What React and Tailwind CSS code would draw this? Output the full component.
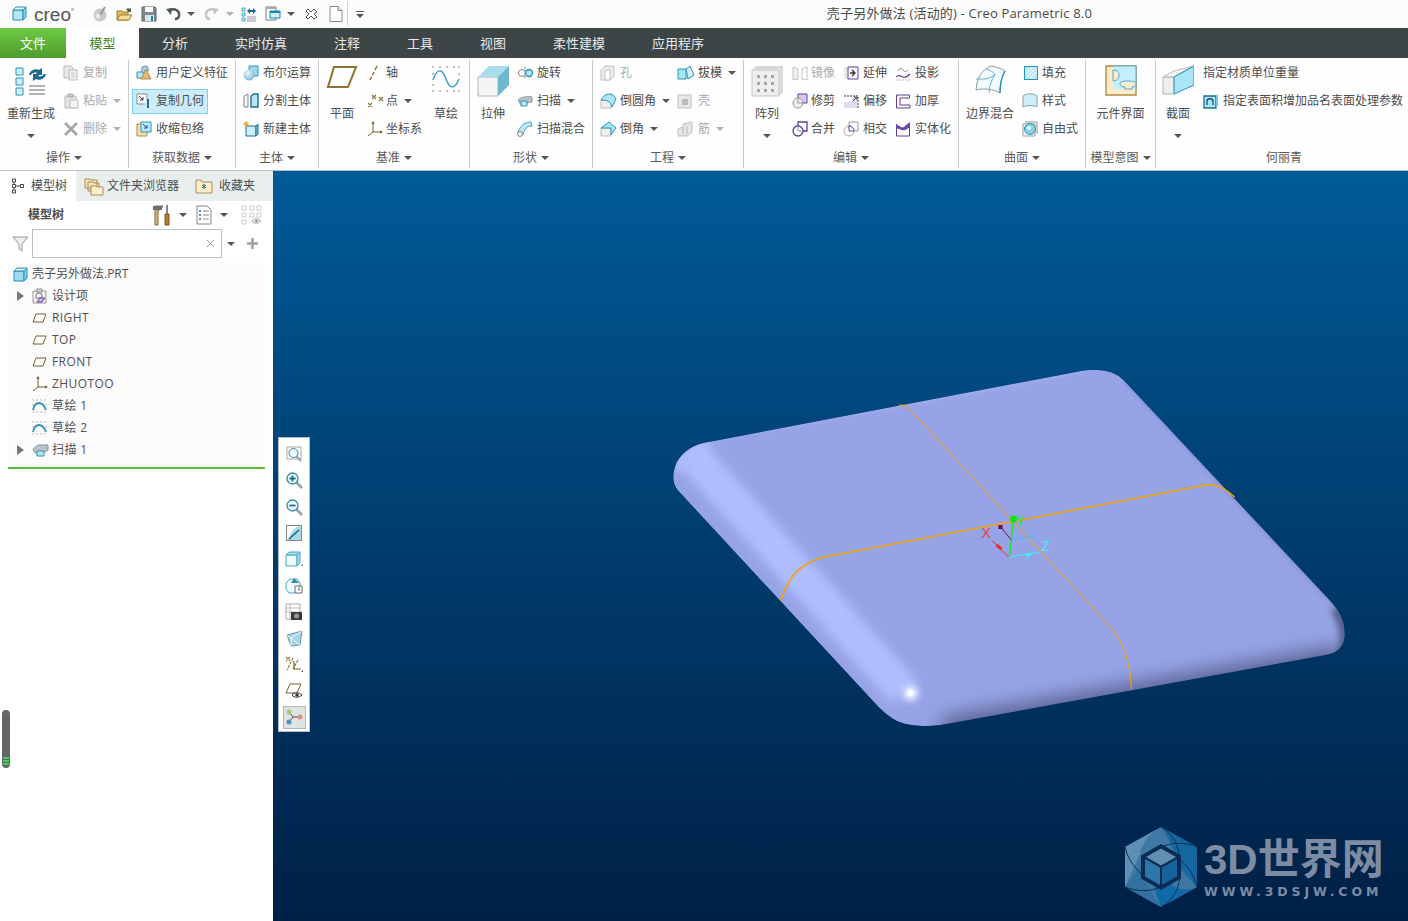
import React from 'react';

const FONT = "font-['Open_Sans','Noto_Sans_CJK_SC',sans-serif]";

// generic pixel-sized svg wrapper
const I = ({ w = 16, h = 16, children, className = '' }) => (
  <svg width={w} height={h} viewBox={`0 0 ${w} ${h}`} fill="none" className={`shrink-0 ${className}`}>
    {children}
  </svg>
);

const Caret = ({ light = false }) => (
  <svg width="8" height="4" viewBox="0 0 8 4" className="shrink-0">
    <path d="M0 0h8L4 4z" fill={light ? '#b0b0b0' : '#555'} />
  </svg>
);

const BoxIcon = ({ x = 1, y = 3, s = 10, d = 3, fill = '#cdeffa', stroke = '#2a93b8' }) => (
  <g stroke={stroke} strokeWidth="1">
    <path d={`M${x} ${y}h${s}v${s}h${-s}z`} fill={fill} />
    <path d={`M${x} ${y}l${d} ${-d}h${s}l${-d} ${d}z`} fill="#eaf9fe" />
    <path d={`M${x + s} ${y}l${d} ${-d}v${s}l${-d} ${d}z`} fill="#8fd0e6" />
  </g>
);

/* quick access icons */
const QDisc = () => (
  <I>
    <circle cx="8" cy="9" r="6.5" fill="#c9c9c9" />
    <path d="M8 9l5-8" stroke="#999" strokeWidth="2" />
    <circle cx="6" cy="10" r="2.5" fill="#e8e8e8" />
  </I>
);
const QFolder = () => (
  <I w={17}>
    <path d="M1 14V5h5l1 1h5v8z" fill="#e0b860" stroke="#a57f2f" />
    <path d="M1 14l3-5h12l-3 5z" fill="#f6dc9a" stroke="#a57f2f" />
    <path d="M10 4c1-2 3-2 4-1l1-1v4h-4l1-1c-1-1-1-1-2-1z" fill="#555" />
  </I>
);
const QSave = () => (
  <I>
    <path d="M1 1h13l1 1v13H1z" fill="#7f8a90" stroke="#5b6468" />
    <path d="M4 1h8v5H4z" fill="#fff" />
    <path d="M4 9h9v6H4z" fill="#d5e8ef" />
    <path d="M10 10h2v5h-2z" fill="#1b8ab5" />
  </I>
);
const QUndo = ({ gray = false }) => (
  <I w={16} h={14}>
    <path d="M5 3C9 1 15 3 14 9c-.4 2-2 3-4 3" stroke={gray ? '#c4c4c4' : '#4b5559'} strokeWidth="2.4" />
    <path d="M1 2l6-1-1 7z" fill={gray ? '#c4c4c4' : '#4b5559'} />
  </I>
);
const QRegen = () => (
  <I>
    <path d="M1 2h3v3H1zM1 7h3v3H1zM1 12h3v3H1z" fill="#cdeffa" stroke="#2a93b8" strokeWidth=".8" />
    <path d="M6 11h9M6 13h9M6 15h9" stroke="#999" />
    <path d="M6 5l3-3v2h2v2H9v2zM15 5l-3-3v2h-1v2h1v2z" fill="#1a6d90" />
  </I>
);
const QWindows = () => (
  <I>
    <path d="M1 1h10v13H1z" fill="#fff" stroke="#777" />
    <path d="M1 1h10v2H1z" fill="#aaa" />
    <path d="M5 5h10v7H5z" fill="#cdeffa" stroke="#1c86ad" />
    <path d="M5 5h10v2H5z" fill="#1c86ad" />
  </I>
);
const QClose = () => (
  <I w={13} h={12}>
    <path d="M3 1l3 3 3-3 3 3-3 2 3 3-3 2-3-3-3 3-2-2 3-3-3-3z" fill="#fff" stroke="#555" />
  </I>
);
const QDoc = () => (
  <I w={14}>
    <path d="M1 .5h8l4 4v11H1z" fill="#fff" stroke="#8a8a8a" />
    <path d="M9 .5v4h4" fill="#e5e5e5" stroke="#8a8a8a" />
  </I>
);

/* ribbon icons, large */
const BigRegen = () => (
  <I w={32} h={32}>
    <path d="M1 3h7v7H1zM1 13h7v7H1zM1 23h7v7H1z" fill="#cdeffa" stroke="#2a93b8" />
    <path d="M14 21h16M14 25h16M14 29h16" stroke="#9a9a9a" strokeWidth="1.6" />
    <path d="M14 10c1-5 7-7 10-5l3-2v7h-7l2-2c-2-1-5 0-6 2zM31 9c-1 5-7 7-10 5l-3 2V9h7l-2 2c2 1 5 0 6-2z" fill="#1a6d90" />
  </I>
);
const BigPlane = () => (
  <I w={32} h={24}>
    <path d="M8 2h22l-8 20H2z" fill="#fff" stroke="#8d7230" strokeWidth="2" />
  </I>
);
const BigSketch = () => (
  <I w={30} h={28}>
    <path d="M2 15C6 3 11 3 15 14c4 11 9 10 13 0" stroke="#3a9fc4" strokeWidth="1.500" />
    <path d="M2 2h.1M9 2h.1M16 2h.1M23 2h.1M28 2h.1M2 9h.1M28 9h.1M2 20h.1M2 26h.1M9 26h.1M16 26h.1M23 26h.1M28 26h.1" stroke="#666" strokeWidth="1.4" strokeLinecap="round" />
  </I>
);
const BigExtrude = () => (
  <I w={32} h={32}>
    <path d="M1 12h20v19H1z" fill="#f5f5f5" stroke="#b5b5b5" />
    <path d="M1 12L12 1h20L21 12z" fill="#a9dcec" />
    <path d="M21 12L32 1v19L21 31z" fill="#6fb6cf" />
    <path d="M21 31l11-11" stroke="#9ad8ec" />
  </I>
);
const BigPattern = () => (
  <I w={32} h={32}>
    <path d="M1 5h27v26H1z" fill="#eee" stroke="#c4c4c4" />
    <path d="M1 5l4-4h27l-4 4zM28 5l4-4v26l-4 4z" fill="#d8d8d8" />
    <path d="M6 10h3v3H6zM13 10h3v3h-3zM20 10h3v3h-3zM6 17h3v3H6zM13 17h3v3h-3zM20 17h3v3h-3zM6 24h3v3H6zM13 24h3v3h-3zM20 24h3v3h-3z" fill="#a5a5a5" />
  </I>
);
const BigBoundary = () => (
  <I w={34} h={32}>
    <path d="M3 25C4 14 8 5 18 1c6 1 11 3 14 5-3 5-5 14-5 22-7-4-16-5-24-3z" fill="#f2fbfe" stroke="#8f9a9e" />
    <path d="M13 4c6 2 8 4 9 5-3 6-6 12-6 19M3 14c6 0 14 1 19-5" stroke="#5db4d0" />
    <path d="M32 6c-3 5-5 14-5 22" stroke="#2a93b8" strokeWidth="1.4" />
  </I>
);
const BigPuzzle = () => (
  <I w={32} h={32}>
    <path d="M1 1h30v29H1z" fill="#fbeccd" stroke="#b58a3f" strokeWidth="1.4" />
    <path d="M8 1h23v23H8z" fill="#c2effb" />
    <path d="M8 1h23v23" stroke="#4fabc9" fill="none" />
    <path d="M8 5c5 0 6 3 6 5s-1 6-6 6z" fill="#fbeccd" stroke="#4fabc9" />
    <path d="M20 24v-2c-3 0-5-1-5-3s3-3 8-3 8 1 8 3c0 2-2 3-4 3v2z" fill="#fbeccd" stroke="#4fabc9" />
  </I>
);
const BigSection = () => (
  <I w={32} h={32}>
    <path d="M1 12h11v17H1z" fill="#eee" stroke="#b5b5b5" />
    <path d="M1 12L12 6l20-5-10 5-10 6z" fill="#f8f8f8" stroke="#b5b5b5" />
    <path d="M12 12L32 1v19L12 29z" fill="#a9e5f7" stroke="#2a93b8" />
  </I>
);

/* ribbon icons, small */
const Copy = () => (
  <I>
    <path d="M1 1h7l2 2v10H1z" fill="#e8e8e8" stroke="#bbb" />
    <path d="M6 5h8v10H6z" fill="#f2f2f2" stroke="#bbb" />
    <path d="M8 8h4M8 10h4M8 12h4" stroke="#c8c8c8" />
  </I>
);
const Paste = () => (
  <I>
    <path d="M2 3h11v12H2z" fill="#e4e4e4" stroke="#bbb" />
    <path d="M5 1h5v3H5z" fill="#ccc" stroke="#aaa" />
    <path d="M7 7h8v8H7z" fill="#f4f4f4" stroke="#bbb" />
  </I>
);
const Del = () => (
  <I>
    <path d="M2 2l12 12M14 2L2 14" stroke="#a5a5a5" strokeWidth="2.6" />
  </I>
);
const Udf = () => (
  <I>
    <path d="M1 7h7v6H1z" fill="#b7e5f5" stroke="#2a93b8" />
    <circle cx="9" cy="4.5" r="3.5" fill="#a7cfe6" stroke="#6a8fb0" />
    <path d="M10 4l5 10H5z" fill="#e0b97a" stroke="#b58a3f" />
  </I>
);
const CopyGeom = () => (
  <I>
    <path d="M1 1h10v10H1z" fill="#fff" stroke="#888" />
    <path d="M3 3l4 4M7 4v3H4" stroke="#333" />
    <path d="M9 6h6v9H9z" fill="#cdeffa" />
    <path d="M11 6h2v9h-2z" fill="#1a6d90" />
  </I>
);
const Shrink = () => (
  <I>
    <path d="M1 3h10v12H1z" fill="#f6dfae" stroke="#b58a3f" />
    <path d="M5 1h10v10H5z" fill="#bdeafa" stroke="#2a93b8" />
    <path d="M7 3l4 4M11 4v3H8" stroke="#1a4d70" />
  </I>
);
const Bool = () => (
  <I>
    <path d="M6 1h9v10H6z" fill="#9fd6ea" stroke="#2a93b8" />
    <circle cx="6" cy="10" r="5.5" fill="url(#sph)" />
    <defs>
      <radialGradient id="sph" cx=".4" cy=".35" r=".7">
        <stop offset="0" stopColor="#eef9fd" />
        <stop offset="1" stopColor="#7ab9cf" />
      </radialGradient>
    </defs>
  </I>
);
const Split = () => (
  <I>
    <path d="M1 3l4-2v13H1z" fill="#eaf8fc" stroke="#888" />
    <path d="M8 3l3-2h4v13H8z" fill="#b7e5f5" stroke="#1a6d90" strokeWidth="1.4" />
  </I>
);
const NewBody = () => (
  <I>
    <path d="M3 5h10v10H3z" fill="#c9f0fb" stroke="#1a6d90" />
    <path d="M13 5l2-2v10l-2 2z" fill="#8fd0e6" stroke="#1a6d90" />
    <circle cx="3" cy="3" r="2" fill="#f3a72a" />
    <path d="M3 0v6M0 3h6" stroke="#f3a72a" />
  </I>
);
const Axis = () => (
  <I w={14}>
    <path d="M10 1L8 5M7 7L5.5 10M4.5 12L3 15" stroke="#8d7230" strokeWidth="1.5" />
  </I>
);
const Point = () => (
  <I w={18} h={14}>
    <path d="M5 1l4 4M9 1L5 5M12 3l4 4M16 3l-4 4M1 9l4 4M5 9l-4 4" stroke="#8d7230" strokeWidth="1.2" />
  </I>
);
const Csys = ({ s = 16 }) => (
  <svg width={s} height={s} viewBox="0 0 16 16" fill="none" className="shrink-0">
    <path d="M6 1v10l-5 4M6 11h9" stroke="#7a5f28" />
    <path d="M4.500 3L6 0l1.500 3zM13 9.500l3 1.500-3 1.500z" fill="#7a5f28" />
  </svg>
);
const Revolve = () => (
  <I w={17} h={14}>
    <path d="M8 1v12" stroke="#777" strokeDasharray="2 1" />
    <circle cx="5" cy="7" r="3.500" stroke="#888" fill="#fff" />
    <circle cx="12" cy="7" r="3.500" stroke="#2a93b8" fill="#b7e5f5" strokeWidth="1.4" />
  </I>
);
const Sweep = () => (
  <I w={16} h={14}>
    <path d="M1 6c3-3 8-4 14-3v5c-3 0-5 1-6 3H4z" fill="#b9c3c8" stroke="#8c979b" />
    <path d="M4 7h6v5H4z" fill="#b7e5f5" stroke="#2a93b8" />
  </I>
);
const Blend = () => (
  <I>
    <path d="M1 12C2 6 7 1 14 1l1 4c-5 0-8 3-9 9z" fill="#bfe7f4" stroke="#4ea5c4" />
    <circle cx="3" cy="13" r="2.500" fill="#eee" stroke="#888" />
  </I>
);
const Hole = () => (
  <I>
    <path d="M1 5l4-4h9v10l-4 4H1z" fill="#eee" stroke="#c0c0c0" />
    <path d="M5 5h5v10H5z" fill="#fff" stroke="#c0c0c0" />
  </I>
);
const Draft = () => (
  <I w={18}>
    <path d="M1 4h8v10H1z" fill="#a9e5f7" stroke="#2a93b8" />
    <path d="M9 4l4-3 4 9-6 4z" fill="#d6f3fb" stroke="#2a93b8" />
  </I>
);
const Round = () => (
  <I w={17}>
    <path d="M1 7h10v8H1z" fill="#eee" stroke="#bbb" />
    <path d="M1 7c2-4 5-6 9-6 3 0 5 3 6 5l-4 8c-1-3-2-7-11-7z" fill="#a9e5f7" stroke="#2a93b8" />
  </I>
);
const Shell = () => (
  <I>
    <path d="M1 2h13v13H1z" fill="#e8e8e8" stroke="#c0c0c0" />
    <path d="M5 6h6v6H5z" fill="#bbb" />
  </I>
);
const Chamfer = () => (
  <I w={17}>
    <path d="M1 7h10v8H1z" fill="#eee" stroke="#bbb" />
    <path d="M1 7l8-6 7 6-5 7V7z" fill="#a9e5f7" stroke="#2a93b8" />
  </I>
);
const Rib = () => (
  <I>
    <path d="M1 8l5-2v-3l9-2v10l-5 4H1z" fill="#e6e6e6" stroke="#c0c0c0" />
    <path d="M6 6v7M10 5v8" stroke="#bbb" />
  </I>
);
const Mirror = () => (
  <I>
    <path d="M1 2l5 2v10l-5 1z" fill="#f0f0f0" stroke="#c0c0c0" />
    <path d="M15 2l-5 2v10l5 1z" fill="#fff" stroke="#c0c0c0" />
  </I>
);
const Extend = () => (
  <I>
    <path d="M1 2h4v12H1z" fill="#e8e8e8" />
    <path d="M5 2h10v12H5z" fill="#fff" stroke="#5c3d99" />
    <path d="M7 8h4M9 5l3 3-3 3" stroke="#333" strokeWidth="1.400" />
  </I>
);
const Project = () => (
  <I>
    <path d="M3 6c2-4 4-3 5-1s3 2 5 0" stroke="#8a8a8a" />
    <path d="M1 12c3-3 5-1 7 0s4 0 7-3" stroke="#6a3fa0" strokeWidth="1.300" />
    <path d="M1 15h14" stroke="#bbb" strokeDasharray="2 1" />
  </I>
);
const Trim = () => (
  <I>
    <path d="M6 1h9v9H6z" fill="#d8cdf0" stroke="#5c3d99" />
    <circle cx="6" cy="10" r="5" fill="#eee" stroke="#999" />
    <path d="M6 10V5M6 10h5" stroke="#999" />
  </I>
);
const Offset = () => (
  <I>
    <path d="M1 3h14v12" stroke="#333" strokeDasharray="2 1" />
    <path d="M1 15V9h8V5l5-2v12z" fill="#e4dbf3" />
    <path d="M10 8l4-4M11 4h3v3" stroke="#444" />
  </I>
);
const Thicken = () => (
  <I>
    <path d="M1.500 2h13v3H5v7h10v3H1.500z" fill="#fff" stroke="#5c3d99" />
  </I>
);
const Merge = () => (
  <I>
    <path d="M6 1h9v9H6z" fill="#fff" stroke="#5c3d99" strokeWidth="1.300" />
    <circle cx="6" cy="10" r="5" fill="#fff" stroke="#5c3d99" strokeWidth="1.300" />
    <path d="M6 10V5M6 10h5" stroke="#999" />
  </I>
);
const Intersect = () => (
  <I>
    <path d="M6 1h9v9H6z" fill="#fff" stroke="#999" />
    <circle cx="6" cy="10" r="5" fill="#fff" stroke="#aaa" />
    <path d="M6 5a5 5 0 015 5H6z" fill="#fff" stroke="#5c3d99" />
  </I>
);
const Solidify = () => (
  <I>
    <path d="M1.500 3v12h13V2" fill="#fff" stroke="#5c3d99" />
    <path d="M1 3l5 3c2 1 3 0 5-2l4-3v5c-3 2-5 4-8 3L1 7z" fill="#6a4aa6" />
  </I>
);
const Fill = () => (
  <I w={14} h={14}>
    <rect x=".5" y=".5" width="13" height="13" fill="#bfe9f6" stroke="#2a93b8" />
    <path d="M2 8l6-6M4 10l6-6M6 12l6-6" stroke="#fff" />
  </I>
);
const Style = () => (
  <I>
    <path d="M1 3c4-3 10-3 14 0v11c-4-2-10-2-14 0z" fill="#cdeffa" stroke="#8a9ea6" />
  </I>
);
const Freeform = () => (
  <I>
    <path d="M1 3h12v12H1zM3 1h12v12" stroke="#999" />
    <circle cx="8" cy="8" r="5.500" fill="#8fd0e6" stroke="#2a93b8" />
    <circle cx="7" cy="7" r="2" fill="#e9f8fd" />
  </I>
);
const FaceParam = () => (
  <I>
    <path d="M1 3h12v12H1z" fill="#a9e5f7" stroke="#1a6d90" strokeWidth="1.300" />
    <path d="M13 3l2-2v12l-2 2z" fill="#7fc4dc" />
    <path d="M4 12V8c0-3 6-3 6 0v4" stroke="#134f6e" strokeWidth="1.300" />
  </I>
);

/* model tree icons */
const TreeTabIcon = () => (
  <I w={14} h={16}>
    <path d="M1.500 1h3v3h-3zM1.500 6.500h3v3h-3zM1.500 12h3v3h-3zM9.500 6.500h3v3h-3zM3 4v2.500M3 9.500V12M4.500 8h5" stroke="#444" />
  </I>
);
const FoldersIcon = () => (
  <I w={20} h={20}>
    <path d="M1 3h5l1 1h6v8H1zM4 6h5l1 1h5v8H4z" fill="#f6e3b6" stroke="#a88d55" />
    <path d="M7 10h5l1 1h6v8H7z" fill="#fbeecb" stroke="#a88d55" />
  </I>
);
const FavIcon = () => (
  <I w={18} h={16}>
    <path d="M1 4V2h5l1 2h10v11H1z" fill="#fbeecb" stroke="#a88d55" />
    <path d="M9 6v5M7 7l4 3M11 7l-4 3" stroke="#1a6d90" />
  </I>
);
const Hammer = () => (
  <I w={20} h={22}>
    <path d="M3 2h8l-3 4H6v15H3z" fill="#d6b378" stroke="#8a6a30" />
    <path d="M1 2h9v4H1z" fill="#66707a" />
    <path d="M14 1h2v9h-2z" fill="#7d868c" />
    <path d="M13 10h4v11h-4z" fill="#b57b2e" stroke="#80551b" />
  </I>
);
const ListIcon = () => (
  <I w={16} h={20}>
    <path d="M1 1h10l4 4v14H1z" fill="#fff" stroke="#888" />
    <path d="M3 6h2M3 10h2M3 14h2" stroke="#1a6d90" strokeWidth="1.400" />
    <path d="M7 6h6M7 10h6M7 14h6" stroke="#888" />
  </I>
);
const TreeHidden = () => (
  <I w={21} h={20}>
    <path d="M1 1h4v4H1zM1 8h4v4H1zM1 15h4v4H1zM9 1h4v4H9zM16 1h4v4h-4zM9 8h4v4H9zM16 8h4v4h-4z" stroke="#ccc" />
    <path d="M11 16c2-3 6-3 9 0-3 3-7 3-9 0z" stroke="#aaa" fill="#eee" />
    <circle cx="15.500" cy="16" r="1.500" fill="#999" />
  </I>
);
const Funnel = () => (
  <I w={17} h={16}>
    <path d="M1 1h15l-6 7v7l-3-2V8z" fill="#eee" stroke="#8e9899" />
  </I>
);
const TreeCube = () => (
  <I w={15} h={15}>
    <BoxIcon x={1} y={4} s={10} d={3} fill="#9fdcf3" stroke="#1f8eb8" />
  </I>
);
const DesignItems = () => (
  <I w={15} h={16}>
    <path d="M1 3h13v12H1z" fill="#f2f2f2" stroke="#999" />
    <path d="M5 1h5v3H5z" fill="#ddd" stroke="#888" />
    <path d="M4 8a3 3 0 016 0v2H4z" stroke="#6a7e88" />
    <path d="M5 14l3-4h5l-3 4z" fill="#cdb5ea" stroke="#6a3fa0" />
  </I>
);
const TreePlane = () => (
  <I w={15} h={10}>
    <path d="M4 1h10l-3 8H1z" fill="#fff" stroke="#7a5f28" />
  </I>
);
const TreeSketch = () => (
  <I w={15} h={14}>
    <path d="M1 11c1-5 3-7 6-7s5 2 7 7" stroke="#2a93b8" strokeWidth="1.800" />
    <path d="M1 1h.1M5 1h.1M9 1h.1M13 1h.1M1 6h.1M14 6h.1M1 13h.1M5 13h.1M9 13h.1M13 13h.1" stroke="#666" strokeLinecap="round" />
  </I>
);
const TreeSweep = () => (
  <I w={17} h={13}>
    <path d="M1 5l5-4h10v5l-5 3H3z" fill="#b9c3c8" stroke="#8c979b" />
    <path d="M5 7h7v5H5z" fill="#b7e5f5" stroke="#2a93b8" />
  </I>
);

/* floating view toolbar icons */
const Zoom = ({ sign }) => (
  <I w={18} h={18}>
    <path d="M11 11l6 6" stroke="#9ba4a8" strokeWidth="2.600" />
    <circle cx="7.500" cy="7.500" r="5.500" fill="#eef9fd" stroke="#2a8aa8" strokeWidth="1.300" />
    {sign === '+' && <path d="M7.500 4.500v6M4.500 7.500h6" stroke="#1a6d90" strokeWidth="1.800" />}
    {sign === '-' && <path d="M4.500 7.500h6" stroke="#1a6d90" strokeWidth="1.800" />}
  </I>
);
const ZoomBox = () => (
  <I w={17} h={17}>
    <path d="M1 1h14v12H1z" fill="#fff" stroke="#aaa" />
    <path d="M10 10l5 5" stroke="#9ba4a8" strokeWidth="2.400" />
    <circle cx="7.500" cy="7" r="4.500" fill="#eef9fd" stroke="#2a8aa8" />
  </I>
);
const Refit = () => (
  <I w={16} h={16}>
    <rect x=".5" y=".5" width="15" height="15" fill="#a9d8e8" stroke="#888" />
    <path d="M1 1h14C9 2 5 6 3 13l-2 2z" fill="#fff" />
    <path d="M3 14L13 5" stroke="#1a6d90" strokeWidth="1.600" />
  </I>
);
const ViewCube = () => (
  <I w={19} h={18}>
    <path d="M1 5h11v11H1z" fill="#eefafe" stroke="#4ba7c6" />
    <path d="M1 5l3-3h11l-3 3zM12 5l3-3v11l-3 3z" fill="#a9dcec" stroke="#4ba7c6" />
    <path d="M16 16h2v-2z" fill="#555" />
  </I>
);
const ViewCube2 = () => (
  <I w={19} h={18}>
    <path d="M1 6l4-4h7l3 4v6l-5 4H4l-3-4z" fill="#eefafe" stroke="#4ba7c6" />
    <path d="M6 6l3-5 5 5z" fill="#3f87aa" />
    <path d="M10 9h7v7h-7z" fill="#fff" stroke="#666" />
    <path d="M13 11h2M13 13h2" stroke="#666" />
  </I>
);
const Camera = () => (
  <I w={18} h={18}>
    <path d="M1 1h14v15H1z" fill="#fff" stroke="#aaa" />
    <path d="M1 5h14M1 9h14M5 1v15" stroke="#bbb" />
    <path d="M6 9h11v8H6z" fill="#3b3b3b" />
    <circle cx="11.500" cy="13" r="2.500" fill="#999" />
  </I>
);
const Perspective = () => (
  <I w={17} h={17}>
    <path d="M1 5l15-4-2 14-9 1z" fill="#a9d4e4" stroke="#5c9bb5" />
    <path d="M5 8l11-7M5 16V8M1 5l4 3M5 8l9 7" stroke="#e4f5fb" />
  </I>
);
const Datums = () => (
  <I w={18} h={18}>
    <path d="M1 1l4 4M5 1L1 5M8 2L2 14M13 4l-5 9" stroke="#8d7230" strokeWidth="1.100" strokeDasharray="3 1" />
    <path d="M9 5v8h7" stroke="#7a5f28" strokeWidth="1.200" />
    <path d="M16 16h2v-2z" fill="#555" />
  </I>
);
const PlaneEye = () => (
  <I w={18} h={16}>
    <path d="M5 1h11l-4 9H1z" fill="#fff" stroke="#7a5f28" />
    <path d="M7 12c2-3 7-3 10 0-3 3-8 3-10 0z" fill="#fff" stroke="#333" />
    <circle cx="12" cy="12" r="1.800" fill="#333" />
  </I>
);
const Nodes = () => (
  <I w={18} h={16}>
    <path d="M4 3l4 5-4 5M8 8h7" stroke="#555" />
    <circle cx="4" cy="3" r="2.500" fill="#9ec97b" />
    <circle cx="4" cy="13" r="2.500" fill="#4f93b8" />
    <circle cx="15" cy="8" r="2.500" fill="#e58a8a" />
  </I>
);

/* ribbon layout helpers */
const Row = ({ icon, text, arrow, gray, iw = 20, selected }) => (
  <div className="h-7 flex items-center whitespace-nowrap">
    <div className={selected ? 'h-[25px] w-[76px] pl-1 flex items-center bg-[#ccecfb] ring-1 ring-inset ring-[#7fd3f2]' : 'flex items-center'}>
      {icon !== undefined && <span className="flex items-center" style={{ width: iw }}>{icon}</span>}
      <span className={gray ? 'text-[#a9a9a9]' : 'text-[#4d4d4d]'}>{text}</span>
      {arrow && <span className="ml-1.5 flex"><Caret light={gray} /></span>}
    </div>
  </div>
);

const Big = ({ icon, label, arrow, w }) => (
  <div className="flex flex-col items-center shrink-0" style={{ width: w }}>
    <div className="h-[38px] pt-1.5 flex justify-center">{icon}</div>
    <div className="mt-2 h-[18px] leading-[18px] text-[#4d4d4d] whitespace-nowrap">{label}</div>
    {arrow && <div className="mt-[11px] flex"><Caret /></div>}
  </div>
);

const Group = ({ w, label, arrow = true, children }) => (
  <div className="flex flex-col shrink-0" style={{ width: w }}>
    <div className="h-[85px] pt-px flex">{children}</div>
    <div className={`h-[27px] flex items-center justify-center gap-1 text-[#5a5a5a] pt-0.5 ${arrow ? '' : 'pl-1'}`}>
      <span>{label}</span>
      {arrow && <Caret />}
    </div>
  </div>
);

const Sep = () => <div className="w-px my-[2px] bg-[#c6cccc] shrink-0" />;

const Tab = ({ children }) => (
  <div className="text-[13px] text-[#e8eaea] whitespace-nowrap mr-[47px] leading-[30px]">{children}</div>
);

const TreeRow = ({ icon, text, expand, root, wide }) => (
  <div className={`h-[22px] flex items-center whitespace-nowrap text-[#505050] ${wide ? 'tracking-[0.4px]' : ''}`}>
    {root ? (
      <>
        <span className="ml-1 w-[19px] flex">{icon}</span>
        <span>{text}</span>
      </>
    ) : (
      <>
        <span className="w-[24px] pl-[9px] flex">
          {expand && (
            <svg width="7" height="10" viewBox="0 0 7 10"><path d="M0 0l7 5-7 5z" fill="#777" /></svg>
          )}
        </span>
        <span className="w-[20px] flex">{icon}</span>
        <span>{text}</span>
      </>
    )}
  </div>
);

// the part in the graphics area, coordinates are page pixels
const OUTLINE =
  'M709 442 L1082 371 Q1110 366 1124 380 L1330 600 Q1346 617 1345 636 Q1344 652 1326 655 L941 725 Q908 729 892 718 Q885 713 879 707 L678 490 Q670 480 677 463 Q686 446 709 442 Z';

const FILTER_BOX = { filterUnits: 'userSpaceOnUse', x: 274, y: 171, width: 1134, height: 750 };

const Model = () => (
  <svg viewBox="274 171 1134 750" className="absolute inset-0 w-full h-full">
    <defs>
      <clipPath id="part"><path d={OUTLINE} /></clipPath>
      <filter id="b10" {...FILTER_BOX}><feGaussianBlur stdDeviation="10" /></filter>
      <filter id="b5" {...FILTER_BOX}><feGaussianBlur stdDeviation="5" /></filter>
      <filter id="b3" {...FILTER_BOX}><feGaussianBlur stdDeviation="3" /></filter>
      <filter id="b2" {...FILTER_BOX}><feGaussianBlur stdDeviation="2" /></filter>
    </defs>
    <g clipPath="url(#part)" fill="none">
      <path d={OUTLINE} fill="#96a3e6" />
      {/* lighter rounded left side */}
      <path d="M690 452 L905 692" stroke="#afbdff" strokeWidth="34" filter="url(#b5)" />
      <path d="M680 470 Q676 450 710 444" stroke="#afbdff" strokeWidth="12" filter="url(#b5)" />
      {/* dark bottom and right edges */}
      <path d="M945 740 L1345 668" stroke="#565f8c" strokeWidth="44" filter="url(#b10)" />
      <path d="M1128 378 L1346 612" stroke="#6e79b4" strokeWidth="6" filter="url(#b3)" />
      <path d="M1336 608 Q1352 630 1342 658" stroke="#565f8c" strokeWidth="12" filter="url(#b3)" />
      <path d="M715 438 L1090 368" stroke="#b4c0f6" strokeWidth="3" filter="url(#b2)" />
      <circle cx="911" cy="693" r="9" fill="#d0daff" filter="url(#b3)" />
      <circle cx="911" cy="693" r="4" fill="#fff" filter="url(#b2)" />
      <circle cx="911" cy="693" r="2.500" fill="#fff" />
    </g>
    {/* section curves */}
    <path d="M899 405 Q905 404 909 408 L1111 627 Q1131 650 1132 690" stroke="#f5a300" strokeWidth="1" fill="none" />
    <path d="M781 601 Q790 575 803 567 Q812 560 825 557 L1207 485 Q1220 483 1235 497" stroke="#f5a300" strokeWidth="1.500" fill="none" />
    {/* triad */}
    <path d="M1014 518 L1010 557" stroke="#22e422" strokeWidth="1.500" />
    <circle cx="1014" cy="519" r="3.500" fill="#14e014" />
    <path d="M1001 527 L1012 540" stroke="#7a0a4a" />
    <rect x="999" y="525" width="4" height="4" fill="#7a0a4a" />
    <path d="M993 541 L1009 557" stroke="#ee2a2a" />
    <path d="M997 545 L1002 549" stroke="#ee2a2a" strokeWidth="3" />
    <path d="M1012 540 L1033 536" stroke="#4fb8f0" />
    <circle cx="1033" cy="536" r="2" fill="#4fb8f0" />
    <path d="M1010 557 L1040 552" stroke="#3ff0f0" />
    <path d="M1026 553 L1033 554 L1027 558z" fill="#3ff0f0" />
    <g className="font-['Liberation_Sans',sans-serif]" fontSize="14">
      <text x="982" y="538" fill="#ee3a3a">X</text>
      <text x="1016" y="526" fill="#22e422">Y</text>
      <text x="1042" y="551" fill="#3ff0f0">Z</text>
    </g>
  </svg>
);

const Watermark = () => (
  <div className="absolute left-[851px] top-[655px] flex items-start gap-[6px]">
    <svg width="74" height="82" viewBox="0 0 74 82" className="shrink-0">
      <path d="M37 1L73 21V61L37 81L1 61V21z" fill="#3f78a5" />
      <path d="M37 1L73 21V61L52 38C50 22 44 10 37 1z" fill="#14689f" />
      <path d="M1 21L37 1C30 5 18 14 16 28L1 61z" fill="#5f8fb3" />
      <path d="M1 61L18 38C18 52 26 66 37 81z" fill="#31709f" />
      <path d="M37 81L73 61C62 66 52 64 46 56L30 62z" fill="#116aa8" />
      <path d="M37 1C50 8 56 22 56 38M73 21C62 16 46 16 36 22M73 61C70 48 62 38 52 30M37 81C50 74 56 62 56 46M1 61C12 66 28 66 38 60M1 21C4 34 12 44 22 52"
        stroke="#0e2f57" strokeWidth="1" fill="none" />
      <path d="M37 18L57 29.500V52.500L37 64L17 52.500V29.500z" fill="#0c2b54" />
      <path d="M37 22.500L52 31L37 39.500L22 31z" fill="#5f8fb3" />
      <path d="M21 33L36 41.500V59L21 50.500z" fill="#2d76a9" />
      <path d="M53 33L38 41.500V59L53 50.500z" fill="#15639a" />
    </svg>
    <div className="flex flex-col pt-[10px]">
      <div className="text-[42px] leading-[48px] font-bold text-[#7d8ca3] whitespace-nowrap font-['Liberation_Sans','Noto_Sans_CJK_SC',sans-serif]">3D世界网</div>
      <div className="-mt-px text-[12.500px] leading-[18px] font-bold tracking-[3.900px] text-[#7d8ca3] whitespace-nowrap font-['DejaVu_Sans',sans-serif]">WWW.3DSJW.COM</div>
    </div>
  </div>
);

const ToolSlot = ({ children }) => <div className="h-[26.300px] flex items-center">{children}</div>;

export default function App() {
  return (
    <div className={`w-[1408px] h-[921px] overflow-hidden flex flex-col bg-white text-xs ${FONT}`}>
      {/* title bar */}
      <div className="h-7 flex items-center bg-[#fcfcfc] shrink-0">
        <div className="ml-3 flex"><I w={16} h={16}><BoxIcon x={1} y={4} s={10} d={3} fill="#b7e5f5" stroke="#1f8eb8" /></I></div>
        <span className="ml-[6px] text-[19px] leading-none text-[#555] font-['Liberation_Sans',sans-serif]">creo</span>
        <span className="text-[7px] text-[#555] -mt-1">°</span>
        <div className="ml-[18px] flex items-center">
          <QDisc />
          <span className="ml-[8px] flex"><QFolder /></span>
          <span className="ml-[8px] flex"><QSave /></span>
          <span className="ml-[8px] flex"><QUndo /></span>
          <span className="ml-[6px] flex"><Caret /></span>
          <span className="ml-[9px] flex [transform:scaleX(-1)]"><QUndo gray /></span>
          <span className="ml-[6px] flex"><Caret light /></span>
          <span className="ml-[7px] flex"><QRegen /></span>
          <span className="ml-[8px] flex"><QWindows /></span>
          <span className="ml-[6px] flex"><Caret /></span>
          <span className="ml-[10px] flex"><QClose /></span>
          <span className="ml-[11px] flex"><QDoc /></span>
          <span className="ml-[4px] w-px h-[24px] bg-[#cfcfcf]" />
          <span className="ml-[8px] flex flex-col gap-[2px]">
            <span className="w-2 h-px bg-[#555]" />
            <Caret />
          </span>
        </div>
        <span className="ml-auto mr-[316px] text-[13px] tracking-[0.18px] text-[#4a4a4a] whitespace-nowrap">壳子另外做法 (活动的) - Creo Parametric 8.0</span>
      </div>

      {/* tabs */}
      <div className="h-[30px] flex bg-[#3d4547] shrink-0">
        <div className="w-[66px] text-center text-[13px] leading-[30px] text-white bg-gradient-to-b from-[#6ccb41] to-[#4f9c2f]">文件</div>
        <div className="w-[73px] text-center text-[13px] leading-[30px] text-[#3f8526] bg-white mr-[23px]">模型</div>
        <Tab>分析</Tab>
        <Tab>实时仿真</Tab>
        <Tab>注释</Tab>
        <Tab>工具</Tab>
        <Tab>视图</Tab>
        <Tab>柔性建模</Tab>
        <Tab>应用程序</Tab>
      </div>

      {/* ribbon */}
      <div className="h-[113px] flex border-b border-[#b9c0c0] bg-[#fefefe] shrink-0">
        <Group w={128} label="操作">
          <Big w={62} icon={<BigRegen />} label="重新生成" arrow />
          <div className="ml-px">
            <Row gray icon={<Copy />} text="复制" />
            <Row gray icon={<Paste />} text="粘贴" arrow />
            <Row gray icon={<Del />} text="删除" arrow />
          </div>
        </Group>
        <Sep />
        <Group w={106} label="获取数据">
          <div className="ml-[3px]">
            <div className="pl-1"><Row icon={<Udf />} text="用户定义特征" /></div>
            <Row selected icon={<CopyGeom />} text="复制几何" />
            <div className="pl-1"><Row icon={<Shrink />} text="收缩包络" /></div>
          </div>
        </Group>
        <Sep />
        <Group w={82} label="主体">
          <div className="ml-[7px]">
            <Row icon={<Bool />} text="布尔运算" />
            <Row icon={<Split />} text="分割主体" />
            <Row icon={<NewBody />} text="新建主体" />
          </div>
        </Group>
        <Sep />
        <Group w={150} label="基准">
          <Big w={46} icon={<BigPlane />} label="平面" />
          <div className="ml-[2px] w-[63px]">
            <Row iw={19} icon={<Axis />} text="轴" />
            <Row iw={19} icon={<Point />} text="点" arrow />
            <Row iw={19} icon={<Csys />} text="坐标系" />
          </div>
          <Big w={32} icon={<BigSketch />} label="草绘" />
        </Group>
        <Sep />
        <Group w={122} label="形状">
          <Big w={46} icon={<BigExtrude />} label="拉伸" />
          <div className="ml-px">
            <Row icon={<Revolve />} text="旋转" />
            <Row icon={<Sweep />} text="扫描" arrow />
            <Row icon={<Blend />} text="扫描混合" />
          </div>
        </Group>
        <Sep />
        <Group w={150} label="工程">
          <div className="ml-[7px] w-[77px]">
            <Row gray icon={<Hole />} text="孔" />
            <Row icon={<Round />} text="倒圆角" arrow />
            <Row icon={<Chamfer />} text="倒角" arrow />
          </div>
          <div>
            <Row iw={21} icon={<Draft />} text="拔模" arrow />
            <Row gray iw={21} icon={<Shell />} text="壳" />
            <Row gray iw={21} icon={<Rib />} text="筋" arrow />
          </div>
        </Group>
        <Sep />
        <Group w={214} label="编辑">
          <Big w={46} icon={<BigPattern />} label="阵列" arrow />
          <div className="ml-[2px] w-[51px]">
            <Row iw={19} gray icon={<Mirror />} text="镜像" />
            <Row iw={19} icon={<Trim />} text="修剪" />
            <Row iw={19} icon={<Merge />} text="合并" />
          </div>
          <div className="w-[52px]">
            <Row icon={<Extend />} text="延伸" />
            <Row icon={<Offset />} text="偏移" />
            <Row icon={<Intersect />} text="相交" />
          </div>
          <div>
            <Row icon={<Project />} text="投影" />
            <Row icon={<Thicken />} text="加厚" />
            <Row icon={<Solidify />} text="实体化" />
          </div>
        </Group>
        <Sep />
        <Group w={126} label="曲面">
          <Big w={62} icon={<BigBoundary />} label="边界混合" />
          <div className="ml-px">
            <Row icon={<span className="pl-[2px] flex"><Fill /></span>} text="填充" />
            <Row icon={<Style />} text="样式" />
            <Row icon={<Freeform />} text="自由式" />
          </div>
        </Group>
        <Sep />
        <Group w={69} label="模型意图">
          <Big w={69} icon={<BigPuzzle />} label="元件界面" />
        </Group>
        <Sep />
        <Group w={252} label="何丽青" arrow={false}>
          <Big w={44} icon={<BigSection />} label="截面" arrow />
          <div className="ml-[3px]">
            <Row text="指定材质单位重量" />
            <Row icon={<FaceParam />} text="指定表面积增加品名表面处理参数" />
          </div>
        </Group>
      </div>

      {/* main area */}
      <div className="flex-1 flex min-h-0">
        <div className="relative w-[273px] shrink-0 bg-white">
          <div className="h-[30px] flex bg-[#e8eeee] text-[#4d4d4d]">
            <div className="w-[76px] bg-white flex items-center pl-[11px]">
              <TreeTabIcon /><span className="ml-[6px]">模型树</span>
            </div>
            <div className="flex items-center pl-2">
              <FoldersIcon /><span className="ml-[3px]">文件夹浏览器</span>
            </div>
            <div className="flex items-center ml-[16px]">
              <FavIcon /><span className="ml-[6px]">收藏夹</span>
            </div>
          </div>
          <div className="h-[28px] flex items-center">
            <span className="ml-7 font-semibold text-[#4d4d4d]">模型树</span>
            <span className="ml-[88px] flex"><Hammer /></span>
            <span className="ml-[7px] flex"><Caret /></span>
            <span className="ml-[9px] flex"><ListIcon /></span>
            <span className="ml-[8px] flex"><Caret /></span>
            <span className="ml-[13px] flex"><TreeHidden /></span>
          </div>
          <div className="h-[29px] flex items-center">
            <span className="ml-3 flex"><Funnel /></span>
            <div className="ml-[3px] w-[190px] h-[29px] border border-[#b8c4c4] bg-white flex items-center justify-end pr-1.5">
              <svg width="9" height="9" viewBox="0 0 9 9"><path d="M1 1l7 7M8 1L1 8" stroke="#999" /></svg>
            </div>
            <span className="ml-[5px] flex"><Caret /></span>
            <span className="ml-[12px] flex">
              <svg width="11" height="11" viewBox="0 0 11 11"><path d="M5.500 0v11M0 5.500h11" stroke="#a0a0a0" strokeWidth="2.500" /></svg>
            </span>
          </div>
          <div className="mt-[5px] ml-2 w-[257px] bg-[#fbfbfb]">
            <div className="pl-px"><TreeRow root icon={<TreeCube />} text="壳子另外做法.PRT" /></div>
            <TreeRow expand icon={<DesignItems />} text="设计项" />
            <TreeRow wide icon={<TreePlane />} text="RIGHT" />
            <TreeRow wide icon={<TreePlane />} text="TOP" />
            <TreeRow wide icon={<TreePlane />} text="FRONT" />
            <TreeRow wide icon={<Csys />} text="ZHUOTOO" />
            <TreeRow wide icon={<TreeSketch />} text="草绘 1" />
            <TreeRow wide icon={<TreeSketch />} text="草绘 2" />
            <TreeRow expand wide icon={<TreeSweep />} text="扫描 1" />
            <div className="mt-[6px] h-[2px] bg-[#5fba3f]" />
          </div>
          {/* small slider stuck on the panel edge */}
          <div className="absolute left-[2px] top-[539px] w-2 h-[58px] rounded-[4px] bg-[#666] overflow-hidden flex flex-col justify-end items-center gap-px pb-[3px]">
            <div className="w-[6px] h-[2px] shrink-0 bg-[#3fd25a]" />
            <div className="w-[6px] h-[2px] shrink-0 bg-[#3fd25a]" />
            <div className="w-[6px] h-[2px] shrink-0 bg-[#3fd25a]" />
          </div>
        </div>

        {/* graphics window */}
        <div className="relative flex-1 bg-gradient-to-b from-[#005b98] to-[#002046]">
          <Model />
          <div className="absolute left-[5px] top-[266px] w-8 h-[295px] bg-white border border-[#b4bcc4] flex flex-col items-center pt-[3px]">
            <ToolSlot><ZoomBox /></ToolSlot>
            <ToolSlot><Zoom sign="+" /></ToolSlot>
            <ToolSlot><Zoom sign="-" /></ToolSlot>
            <ToolSlot><Refit /></ToolSlot>
            <ToolSlot><ViewCube /></ToolSlot>
            <ToolSlot><ViewCube2 /></ToolSlot>
            <ToolSlot><Camera /></ToolSlot>
            <ToolSlot><Perspective /></ToolSlot>
            <ToolSlot><Datums /></ToolSlot>
            <ToolSlot><PlaneEye /></ToolSlot>
            <div className="mt-[2px] w-[23px] h-[23px] bg-[#dfe3e3] border border-[#b0b6b6] flex items-center justify-center"><Nodes /></div>
          </div>
          <Watermark />
        </div>
      </div>
    </div>
  );
}
